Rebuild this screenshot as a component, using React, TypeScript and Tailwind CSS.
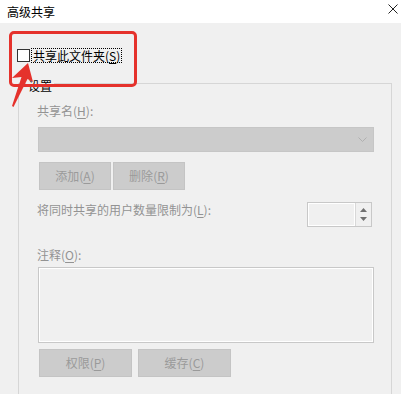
import React from 'react';

const font = { fontFamily: '"Noto Sans CJK SC", "Liberation Sans", sans-serif' };

function Key({ k }: { k: string }) {
  return (
    <>
      (<span className="underline underline-offset-[2px] decoration-1">{k}</span>)
    </>
  );
}

function GrayButton({ label, k, w }: { label: string; k: string; w: string }) {
  return (
    <div
      className={`${w} h-[28px] flex items-center justify-center bg-[#cccccc] border border-[#c4c4c4] text-[#9a9a9a] leading-[16px]`}
    >
      {label}
      <Key k={k} />
    </div>
  );
}

export default function App() {
  return (
    <div
      className="relative w-[401px] h-[394px] overflow-hidden bg-[#f0f0f0] text-[12px] text-black"
      style={font}
    >
      {/* title bar */}
      <div className="h-[23px] bg-white flex items-center justify-between pl-[7px] pr-[3px] leading-[16px]">
        <span>高级共享</span>
        <svg width="10" height="10" viewBox="0 0 10 10" className="mb-[5px]">
          <path d="M0.5 0.5 L9.5 9.5 M9.5 0.5 L0.5 9.5" stroke="#222" strokeWidth="1" fill="none" />
        </svg>
      </div>

      {/* share checkbox */}
      <div className="pl-[17px] pt-[25px]">
        <label className="flex items-center h-[15px] gap-[1px]">
          <span className="w-[13px] h-[13px] border border-[#333333] bg-white" />
          <span className="border border-dotted border-black leading-[13px] px-[1px]">
            共享此文件夹<Key k="S" />
          </span>
        </label>
      </div>

      {/* settings group */}
      <div className="ml-[18px] mt-[20px] w-[374px] h-[400px] border border-b-0 border-[#d6d6d6] pl-[19px] pr-[17px] flex flex-col">
        <div className="-mt-[6px] -ml-[12px] h-[16px] leading-[16px]">
          <span className="bg-[#f0f0f0] px-[2px]">设置</span>
        </div>

        <div className="mt-[9px] leading-[16px] text-[#939393] -ml-[1px]">
          共享名<Key k="H" />:
        </div>
        <div className="mt-[8px] h-[25px] bg-[#cccccc] border border-[#c6c6c6] flex items-center justify-end pr-[6px]">
          <svg width="9" height="6" viewBox="0 0 9 6">
            <path d="M0.5 0.5 L4.5 4.5 L8.5 0.5" stroke="#b0b0b0" strokeWidth="1" fill="none" />
          </svg>
        </div>

        <div className="mt-[10px] flex gap-[2px] pl-[1px]">
          <GrayButton label="添加" k="A" w="w-[72px]" />
          <GrayButton label="删除" k="R" w="w-[72px]" />
        </div>

        <div className="mt-[12px] flex items-start justify-between">
          <span className="leading-[16px] text-[#939393] -ml-[1px]">
            将同时共享的用户数量限制为<Key k="L" />:
          </span>
          <div className="mr-[2px] w-[65px] h-[25px] border border-[#c8c8c8] flex">
            <div className="flex-1 border border-white" />
            <div className="w-[16px] border-l border-[#d8d8d8] flex flex-col items-center justify-around py-[2px]">
              <svg width="7" height="4" viewBox="0 0 7 4">
                <path d="M0 4 L3.5 0 L7 4 Z" fill="#707070" />
              </svg>
              <svg width="7" height="4" viewBox="0 0 7 4">
                <path d="M0 0 L3.5 4 L7 0 Z" fill="#707070" />
              </svg>
            </div>
          </div>
        </div>

        <div className="mt-[20px] leading-[16px] text-[#939393] -ml-[1px]">
          注释<Key k="O" />:
        </div>
        <div className="mt-[4px] h-[76px] border border-[#c8c8c8]">
          <div className="h-full border border-white" />
        </div>

        <div className="mt-[6px] flex gap-[6px] pl-[1px]">
          <GrayButton label="权限" k="P" w="w-[93px]" />
          <GrayButton label="缓存" k="C" w="w-[93px]" />
        </div>
      </div>

      {/* annotation: red highlight box */}
      <div className="absolute left-[9px] top-[31px] w-[128px] h-[56px] border-[3px] border-[#e5322c] rounded-[5px]" />

      {/* annotation: red arrow */}
      <svg className="absolute left-0 top-0" width="60" height="120" viewBox="0 0 60 120">
        <path
          d="M28 63 L33 82 L27.5 79 L13.5 107 L12 106 L21.5 77 L12 78 Z"
          fill="#e5322c"
        />
      </svg>
    </div>
  );
}
